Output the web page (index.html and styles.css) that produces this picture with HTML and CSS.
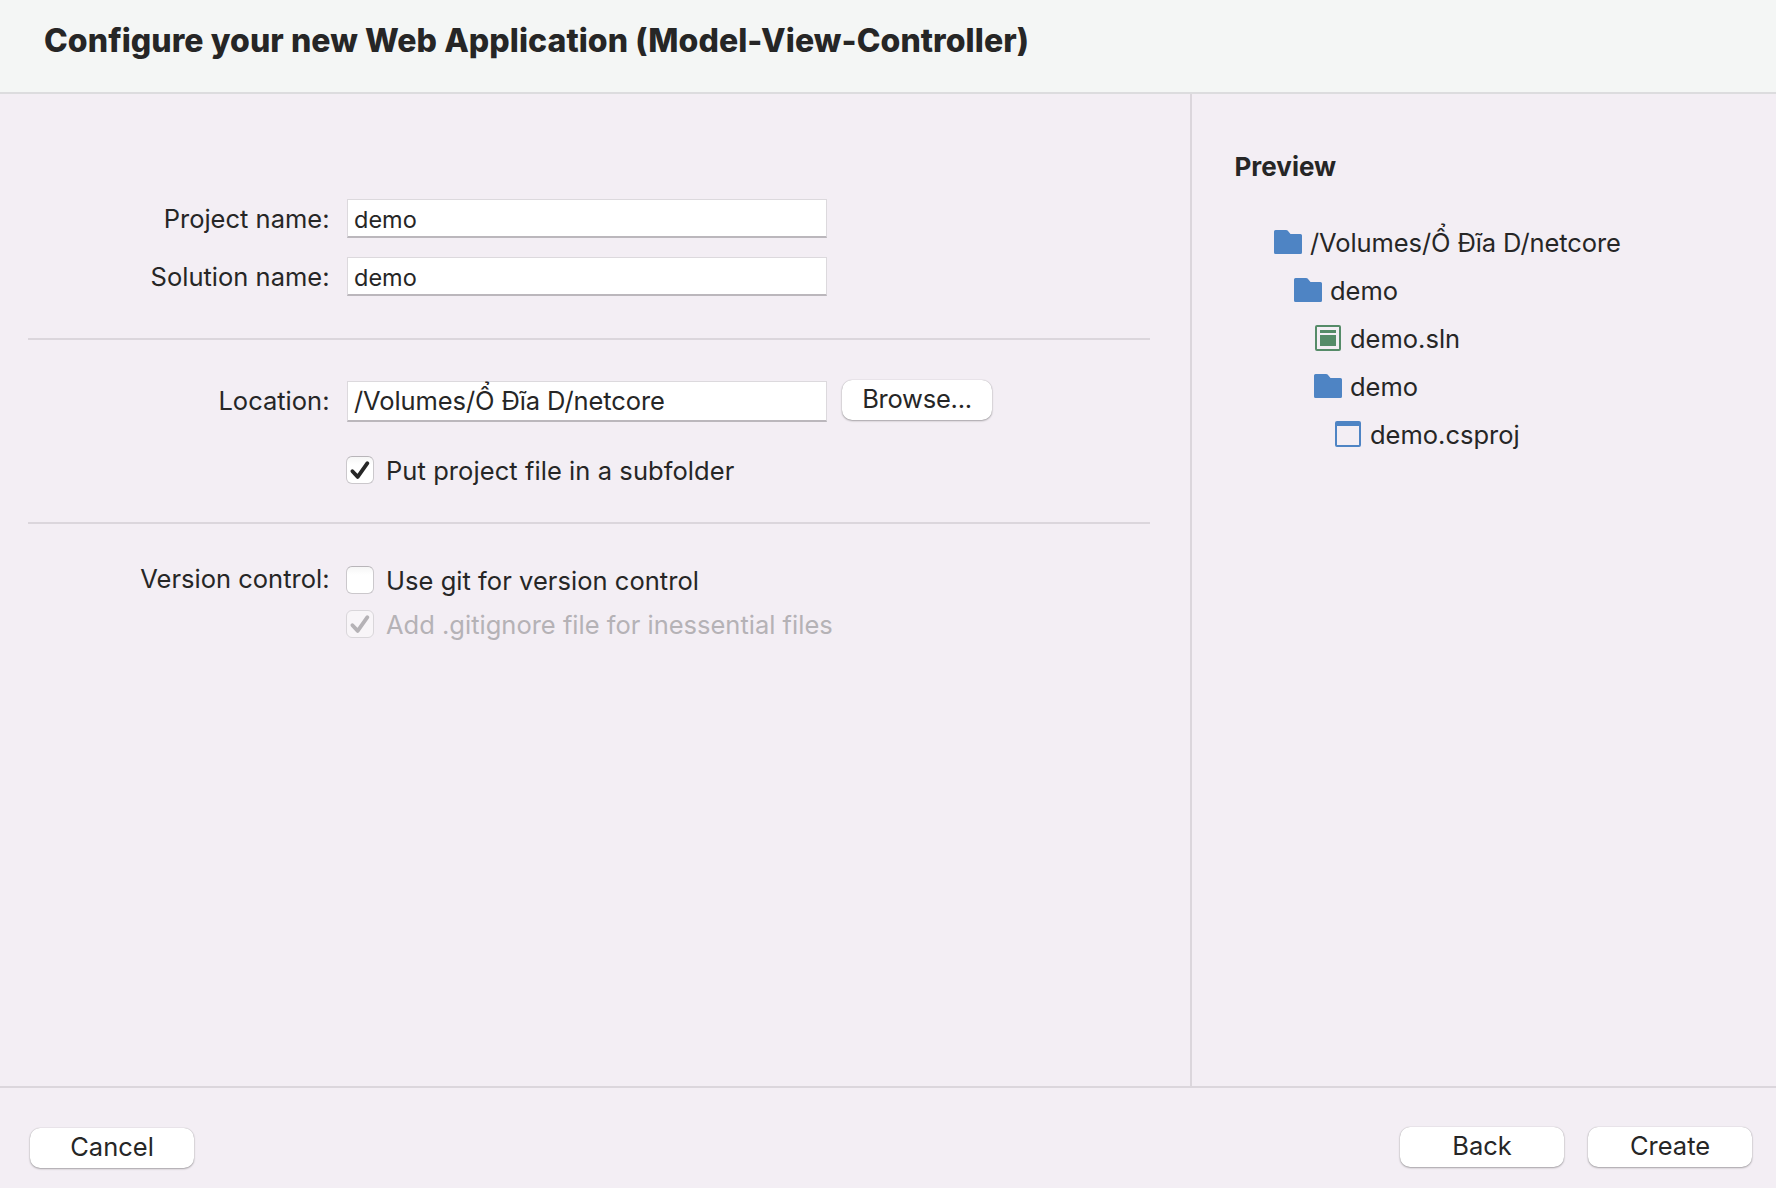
FILE: index.html
```html
<!DOCTYPE html>
<html lang="en">
<head>
<meta charset="utf-8">
<title>Configure your new Web Application</title>
<link rel="stylesheet" href="styles.css">
</head>
<body>
<svg width="0" height="0" class="defs">
  <symbol id="folder" viewBox="0 0 28 24"><path fill="#4e84c4" d="M1.5 0H12.2Q13 0 13.6.6L16.5 4H26.5Q28 4 28 5.5V22.5Q28 24 26.5 24H1.5Q0 24 0 22.5V1.5Q0 0 1.5 0Z"/></symbol>
  <symbol id="check" viewBox="0 0 28 28"><path fill="none" stroke="currentColor" stroke-width="3.8" stroke-linecap="round" stroke-linejoin="round" d="M6.4 15.2 11.7 20.9 21.4 7.2"/></symbol>
</svg>
<div class="dialog">
  <header class="header"><h1>Configure your new Web Application (Model-View-Controller)</h1></header>
  <main class="main">
    <form class="form">
      <div class="row row-name"><label>Project name:</label><div class="field small">demo</div></div>
      <div class="row row-name"><label>Solution name:</label><div class="field small">demo</div></div>
      <hr>
      <div class="row row-location"><label class="location">Location:</label><div class="field path">/Volumes/Ổ Đĩa D/netcore</div><button type="button" class="button browse">Browse...</button></div>
      <div class="row row-sub"><label></label><div class="box"><svg><use href="#check"/></svg></div><span class="opt put">Put project file in a subfolder</span></div>
      <hr>
      <div class="row row-git"><label class="version">Version control:</label><div class="box"></div><span class="opt git">Use git for version control</span></div>
      <div class="row row-ignore"><label></label><div class="box off"><svg><use href="#check"/></svg></div><span class="opt">Add .gitignore file for inessential files</span></div>
    </form>
    <aside class="preview">
      <h2>Preview</h2>
      <ul class="tree">
        <li class="l0"><svg class="folder"><use href="#folder"/></svg><span class="path">/Volumes/Ổ Đĩa D/netcore</span></li>
        <li class="l1"><svg class="folder"><use href="#folder"/></svg><span>demo</span></li>
        <li class="l2"><svg class="file" viewBox="0 0 26 26"><rect x="1" y="1" width="24" height="24" rx="1" fill="none" stroke="#558b68" stroke-width="2"/><path fill="#558b68" d="M5 5H21V8H5ZM5 10H21V21H5Z"/></svg><span>demo.sln</span></li>
        <li class="l2"><svg class="folder"><use href="#folder"/></svg><span>demo</span></li>
        <li class="l3"><svg class="file" viewBox="0 0 26 26"><rect x="1" y="1" width="24" height="24" rx="1" fill="none" stroke="#4e84c4" stroke-width="2"/><path fill="#4e84c4" d="M1 1H25V5H1Z"/></svg><span>demo.csproj</span></li>
      </ul>
    </aside>
  </main>
  <footer class="footer">
    <button type="button" class="button cancel">Cancel</button>
    <button type="button" class="button back">Back</button>
    <button type="button" class="button create">Create</button>
  </footer>
</div>
</body>
</html>
```
FILE: styles.css
```css
* { box-sizing: border-box; }
body { margin: 0; font: 25.5px/40px Inter, "Liberation Sans", sans-serif; color: #262626; }
h1, h2, ul, hr { margin: 0; padding: 0; }
.defs { display: block; }
.dialog { display: flex; flex-direction: column; width: 1776px; height: 1188px; background: #f3eef4; }
.header { height: 94px; padding: 20px 44px 0; background: #f4f6f5; border-bottom: 2px solid #dcdcde; }
h1 { font-size: 32px; line-height: 41px; font-weight: 800; white-space: nowrap; letter-spacing: .07px; }
.main { flex: 1; display: flex; }
.form { width: 1190px; padding: 105px 40px 0 28px; }
.row { display: flex; align-items: center; white-space: nowrap; }
.row label { width: 301.5px; margin-right: 17.5px; text-align: right; }
.row-name { height: 39px; margin-bottom: 19px; }
.field { width: 480px; height: 100%; padding-left: 6px; display: flex; align-items: center; background: #fff; border: 1px solid #dcd9dd; border-bottom: 2px solid #bbb7bc; }
.small { font-size: 23.5px; padding-top: 4px; }
.path { letter-spacing: -.1px; }
hr { height: 2px; border: 0; background: #dbd6dc; }
.row-name + hr { margin-top: 42px; }
.row-location { height: 41px; margin-top: 41px; }
.location { padding-bottom: 2px; }
.button { height: 40px; width: 164px; padding: 0 0 2px; border: 0; border-radius: 10px; background: #fff; color: inherit; font: inherit; line-height: 38px; box-shadow: 0 0 1px rgba(0,0,0,.3), 0 1px 2px rgba(0,0,0,.3); }
.browse { width: 150px; margin: -3px 0 0 15px; letter-spacing: -.25px; }
.box { width: 28px; height: 28px; margin-left: -1px; border: 1px solid #cbc8cc; border-top-color: #b8b5b9; border-radius: 6px; background: linear-gradient(#f6f6f6, #fff 30%); }
.box svg { display: block; width: 28px; height: 28px; margin: -1px; }
.opt { margin-left: 12px; padding-top: 2px; }
.put { letter-spacing: .07px; }
.git { letter-spacing: .04px; }
.version { padding-bottom: 3px; }
.row-sub { height: 40px; margin: 28px 0 32px; }
.row-git { height: 40px; margin-top: 36px; }
.row-ignore { height: 40px; margin-top: 4px; color: #b5b2b6; }
.off { background: #f8f5f8; border-color: #d9d6da; }
.preview { flex: 1; border-left: 2px solid #dbd6dc; padding: 53px 0 0 42.5px; }
h2 { font-size: 26px; line-height: 40px; font-weight: 700; }
.tree { list-style: none; padding-top: 32px; margin-left: -.5px; }
.tree li { display: flex; align-items: center; height: 48px; }
.folder { width: 28px; height: 24px; margin: 0 8px 2px 0; }
.file { width: 26px; height: 26px; margin: 0 9px 2px 1px; }
.l0 { padding-left: 40px; }
.l1 { padding-left: 60px; }
.l2 { padding-left: 80px; }
.l3 { padding-left: 100px; }
.footer { height: 102px; border-top: 2px solid #dbd6dc; padding: 39px 24px 0 30px; display: flex; }
.cancel { margin: 1px auto 0 0; }
.create { margin-left: 24px; }
```
